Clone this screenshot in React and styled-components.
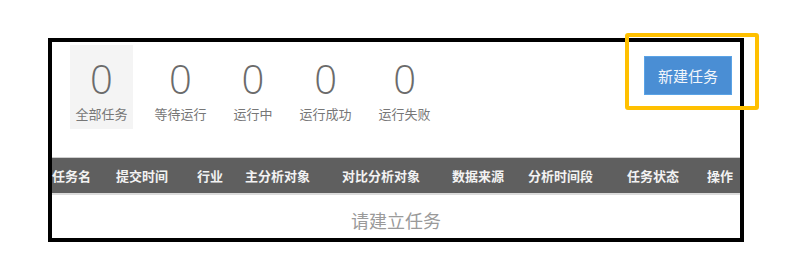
import React from 'react';
import styled, { createGlobalStyle } from 'styled-components';

const GlobalStyle = createGlobalStyle`
  html, body {
    margin: 0;
    padding: 0;
    background: #fff;
    font-family: "Noto Sans CJK SC", "Noto Sans", sans-serif;
  }
`;

const Frame = styled.div`
  position: relative;
  box-sizing: border-box;
  width: 696px;
  height: 204px;
  margin: 38px 0 0 48px;
  border: 4px solid #000;
  background: #fff;
  display: flex;
  flex-direction: column;
`;

// yellow annotation box drawn over the frame corner
const Highlight = styled.div`
  position: absolute;
  left: 573px;
  top: -9px;
  width: 134px;
  height: 77px;
  box-sizing: border-box;
  border: 4px solid #ffc000;
  border-radius: 3px;
  pointer-events: none;
`;

const TopBar = styled.div`
  height: 115px;
  flex: none;
  display: flex;
  justify-content: space-between;
  align-items: flex-start;
  padding: 3px 8px 0 18px;
  box-sizing: border-box;
`;

const Stats = styled.div`
  display: flex;
  gap: 16px;
`;

const Stat = styled.div`
  display: flex;
  flex-direction: column;
  align-items: center;
  padding: 12px 5.5px 6px;
  height: 84px;
  box-sizing: border-box;
  background: ${(p) => (p.$active ? '#f4f4f4' : 'transparent')};
`;

const Count = styled.div`
  font-family: "Open Sans", "Noto Sans", sans-serif;
  font-weight: 300;
  font-size: 40px;
  line-height: 44px;
  color: #6b6b6b;
`;

const Label = styled.div`
  margin-top: 4px;
  font-size: 13px;
  line-height: 18px;
  color: #777;
  white-space: nowrap;
`;

const NewButton = styled.button`
  margin-top: 11px;
  width: 88px;
  height: 39px;
  box-sizing: border-box;
  border: 1px solid #5aa3e6;
  background: #4a8ed4;
  color: #f2f6fb;
  font-family: "Noto Sans CJK SC", sans-serif;
  font-size: 15px;
  cursor: pointer;
`;

const HeadRow = styled.div`
  flex: none;
  display: grid;
  grid-template-columns: 64px 81px 48px 97px 110px 76px 99px 80px 1fr;
  align-items: center;
  height: 35px;
  background: #5f5f5f;
  border-top: 1px solid #cfcfcf;
  border-bottom: 2px solid #dcdcdc;
`;

const HeadCell = styled.div`
  font-size: 13px;
  font-weight: 700;
  color: #f2f2f2;
  white-space: nowrap;
`;

const Empty = styled.div`
  flex: 1;
  display: flex;
  align-items: center;
  justify-content: center;
  padding-top: 7px;
  font-size: 18px;
  color: #9a9a9a;
`;

const stats = [
  { label: '全部任务', count: 0, active: true },
  { label: '等待运行', count: 0 },
  { label: '运行中', count: 0 },
  { label: '运行成功', count: 0 },
  { label: '运行失败', count: 0 },
];

const columns = ['任务名', '提交时间', '行业', '主分析对象', '对比分析对象', '数据来源', '分析时间段', '任务状态', '操作'];

const App = () => {
  return (
    <>
      <GlobalStyle />
      <Frame>
        <TopBar>
          <Stats>
            {stats.map((s) => (
              <Stat key={s.label} $active={s.active}>
                <Count>{s.count}</Count>
                <Label>{s.label}</Label>
              </Stat>
            ))}
          </Stats>
          <NewButton>新建任务</NewButton>
        </TopBar>
        <HeadRow>
          {columns.map((c) => (
            <HeadCell key={c}>{c}</HeadCell>
          ))}
        </HeadRow>
        <Empty>请建立任务</Empty>
        <Highlight />
      </Frame>
    </>
  );
};

export default App;
